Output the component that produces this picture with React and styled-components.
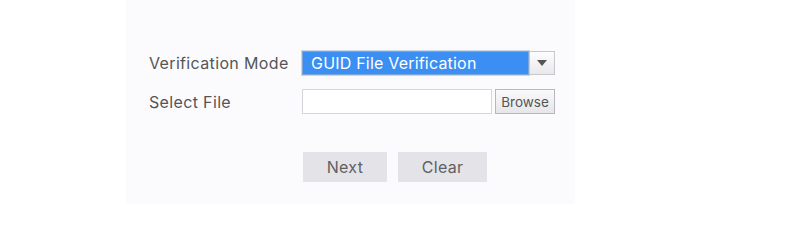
import React from 'react';
import styled, { createGlobalStyle } from 'styled-components';

const GlobalStyle = createGlobalStyle`
	html, body {
		margin: 0;
		background: #ffffff;
	}
	body {
		font-family: Inter, 'Noto Sans', sans-serif;
	}
`;

const Panel = styled.div`
	margin-left: 126px;
	width: 449px;
	height: 204px;
	background: #fbfbfd;
	box-sizing: border-box;
	padding: 51px 0 0 23px;
`;

const Form = styled.div`
	display: grid;
	grid-template-columns: 153px 253px;
	row-gap: 14px;
	align-items: center;
`;

const Label = styled.div`
	font-size: 16px;
	color: #555558;
	letter-spacing: 0.35px;
`;

const Select = styled.div`
	display: flex;
	height: 24px;
`;

const SelectValue = styled.div`
	flex: 1;
	background: #3b8ef2;
	border: 1px solid #7aa6d8;
	box-sizing: border-box;
	color: #ffffff;
	font-size: 16px;
	letter-spacing: 0.2px;
	line-height: 22px;
	padding-left: 8px;
	outline: 1px solid #c9d6e6;
`;

const ArrowButton = styled.div`
	width: 26px;
	box-sizing: border-box;
	border: 1px solid #c8c8cc;
	background: linear-gradient(#fdfdfd, #e9e9ec);
	display: flex;
	align-items: center;
	justify-content: center;
`;

const FileRow = styled.div`
	display: flex;
	gap: 3px;
	height: 25px;
`;

const FileField = styled.div`
	flex: 1;
	background: #ffffff;
	border: 1px solid #d6d6da;
`;

const BrowseButton = styled.div`
	width: 60px;
	box-sizing: border-box;
	border: 1px solid #b8b8bc;
	background: linear-gradient(#fafafa, #e6e6e8);
	font-size: 13.5px;
	color: #555558;
	display: flex;
	align-items: center;
	justify-content: center;
`;

const Actions = styled.div`
	display: flex;
	gap: 11px;
	margin: 38px 0 0 154px;
`;

const Button = styled.div`
	width: ${p => p.$w}px;
	height: 30px;
	background: #e4e4e8;
	color: #606064;
	font-size: 16px;
	letter-spacing: 0.3px;
	display: flex;
	align-items: center;
	justify-content: center;
`;

export default function App() {
	return (
		<>
			<GlobalStyle />
			<Panel>
				<Form>
					<Label>Verification Mode</Label>
					<Select>
						<SelectValue>GUID File Verification</SelectValue>
						<ArrowButton>
							<svg width="10" height="6" viewBox="0 0 10 6">
								<path d="M0 0 L10 0 L5 6 Z" fill="#555" />
							</svg>
						</ArrowButton>
					</Select>
					<Label>Select File</Label>
					<FileRow>
						<FileField />
						<BrowseButton>Browse</BrowseButton>
					</FileRow>
				</Form>
				<Actions>
					<Button $w={84}>Next</Button>
					<Button $w={89}>Clear</Button>
				</Actions>
			</Panel>
		</>
	);
}
